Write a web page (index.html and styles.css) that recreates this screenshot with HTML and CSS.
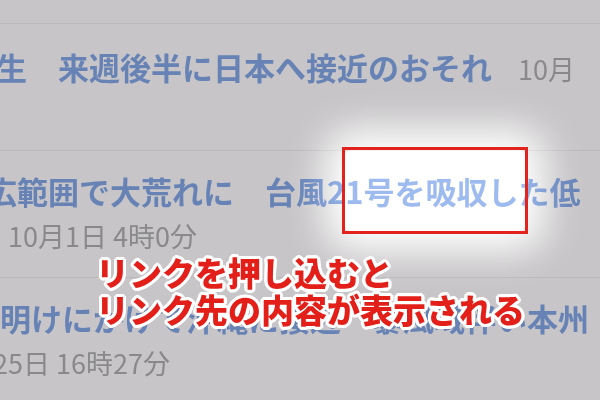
FILE: index.html
```html
<!DOCTYPE html>
<html lang="ja">
<head>
<meta charset="utf-8">
<title>リンクを押し込む</title>
<link rel="stylesheet" href="styles.css">
</head>
<body>
<div class="screen">
  <ul class="news">
    <li class="item item-first">
      <p class="headline headline-first">生　来週後半に日本へ接近のおそれ<span class="date-inline">10月</span></p>
    </li>
    <li class="item">
      <p class="headline headline-second">広範囲で大荒れに　台風21号を吸収した低</p>
      <p class="date date-second">10月1日 4時0分</p>
    </li>
    <li class="item">
      <p class="headline">明けにかけて沖縄に接近　暴風域伴い本州</p>
      <p class="date date-third">25日 16時27分</p>
    </li>
  </ul>
  <div class="glow"></div>
  <div class="veil"></div>
  <div class="focus-box"></div>
  <p class="caption">リンクを押し込むと<br>リンク先の内容が表示される</p>
</div>
</body>
</html>
```
FILE: styles.css
```css
* { box-sizing: border-box; }
html, body { margin: 0; padding: 0; }
body {
  width: 600px;
  height: 400px;
  overflow: hidden;
  background: #c7c5c7;
  font-family: "Noto Sans CJK JP", "Noto Sans", sans-serif;
}
.screen {
  position: relative;
  width: 600px;
  height: 400px;
  overflow: hidden;
  background: #c7c5c7;
  isolation: isolate;
}
.news {
  list-style: none;
  margin: 0;
  padding: 23px 0 0;
}
.item {
  height: 127px;
  border-top: 1px solid #bbb9bb;
  padding-top: 20px;
}
.item-first { padding-top: 23px; }
.headline {
  margin: 0;
  white-space: nowrap;
  font-size: 31px;
  line-height: 40px;
  font-weight: 600;
  color: #6783b6;
}
.headline-first { margin-left: -4px; }
.headline-second { margin-left: -14px; }
.date-inline {
  margin-left: 26px;
  font-size: 27px;
  font-weight: 400;
  color: #89888a;
}
.date {
  margin: 9px 0 0;
  white-space: nowrap;
  font-size: 27px;
  line-height: 32px;
  font-weight: 400;
  color: #89888a;
}
.date-second { margin-left: 8px; }
.date-third { margin-left: -7px; }
.glow {
  position: absolute;
  left: 344px;
  top: 149px;
  width: 182px;
  height: 83px;
  border-radius: 10px;
  background: #3b3b3b;
  box-shadow: 0 0 38px 18px #3b3b3b;
  mix-blend-mode: color-dodge;
}
.veil {
  position: absolute;
  left: 344px;
  top: 149px;
  width: 182px;
  height: 83px;
  border-radius: 10px;
  background: rgba(255, 255, 255, 0.2);
  box-shadow: 0 0 38px 18px rgba(255, 255, 255, 0.2);
}
.focus-box {
  position: absolute;
  left: 342px;
  top: 147px;
  width: 186px;
  height: 87px;
  border: 3px solid #e2231d;
}
.caption {
  position: absolute;
  left: 96px;
  top: 254px;
  margin: 0;
  white-space: nowrap;
  font-size: 33px;
  line-height: 37px;
  font-weight: 900;
  color: #e31f1a;
  text-shadow:
    3px 0 0 #fff, -3px 0 0 #fff, 0 3px 0 #fff, 0 -3px 0 #fff,
    2px 2px 0 #fff, -2px 2px 0 #fff, 2px -2px 0 #fff, -2px -2px 0 #fff,
    3px 1px 0 #fff, -3px 1px 0 #fff, 3px -1px 0 #fff, -3px -1px 0 #fff,
    1px 3px 0 #fff, -1px 3px 0 #fff, 1px -3px 0 #fff, -1px -3px 0 #fff;
}
```
